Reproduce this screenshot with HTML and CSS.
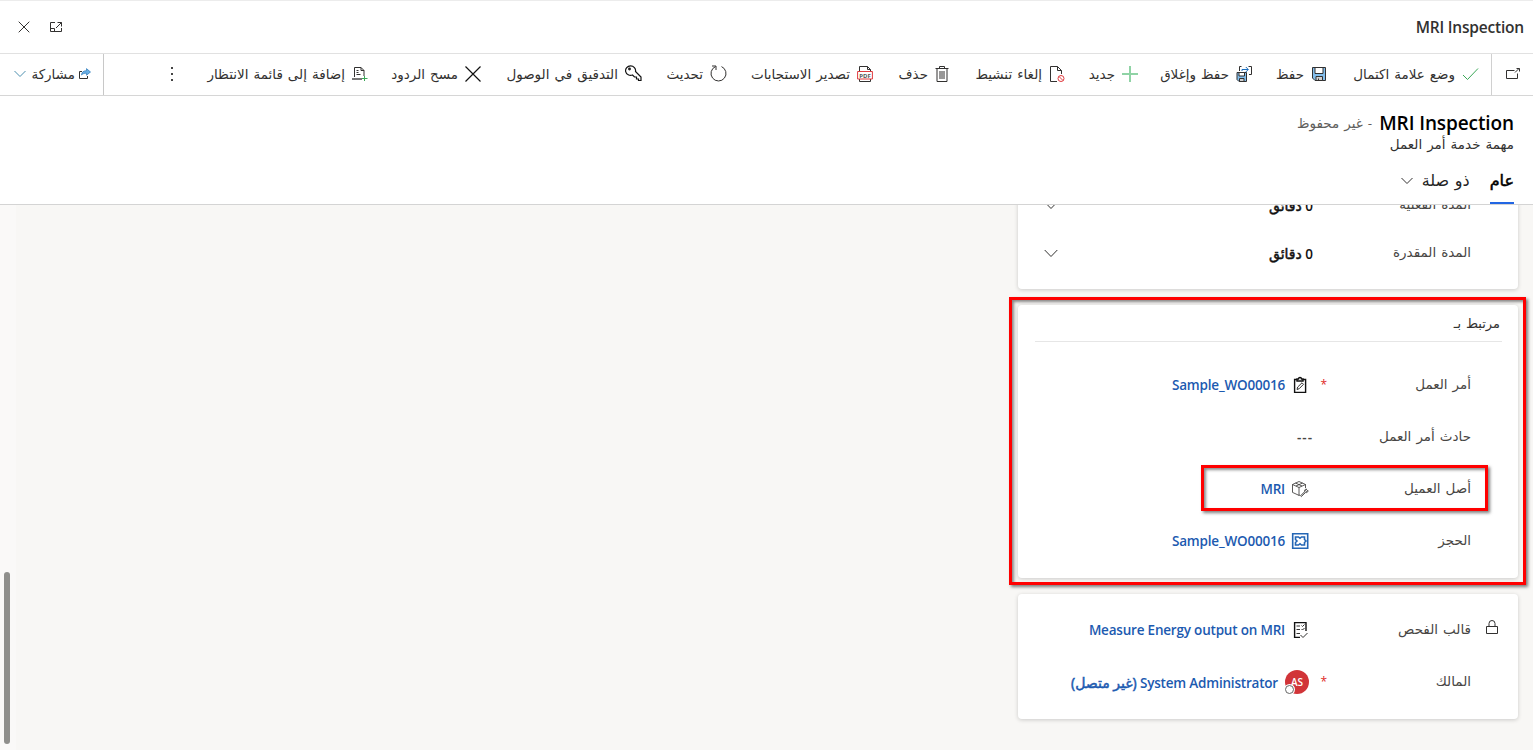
FILE: index.html
```html
<!DOCTYPE html>
<html lang="ar" dir="rtl">
<head>
  <meta charset="UTF-8" />
  <meta name="viewport" content="width=device-width, initial-scale=1.0" />
  <title>MRI Inspection</title>
  <link rel="stylesheet" href="styles.css">
</head>
<body>
  <!-- dialog title -->
  <div class="dialog-bar">
    <h1 class="dialog-title">MRI Inspection</h1>
    <div class="dialog-actions">
      <svg class="icon-expand" width="14" height="12" viewBox="0 0 14 12"><path d="M6 1.500H1.500v9h11V7M1.500 7.500h4v3M8.500 1.500h4v4M12.500 1.500L7 7"/></svg>
      <svg class="icon-close" width="12" height="12" viewBox="0 0 12 12"><path d="M.7.7l10.600 10.600M11.300.7L.7 11.300"/></svg>
    </div>
  </div>

  <!-- command bar -->
  <div class="command-bar">
    <div class="popout">
      <svg width="16" height="13" viewBox="0 0 16 13"><path d="M9.500 3.500H1.500v8h11V6.500M10 5.500l4-4M11.500 1.500h3v3"/></svg>
    </div>
    <div class="commands">
      <div class="command">
        <svg width="17" height="16" viewBox="0 0 17 16"><path class="green" d="M1 9l4.500 4.500L16 2.500"/></svg>
        <span>وضع علامة اكتمال</span>
      </div>
      <div class="command">
        <svg width="16" height="16" viewBox="0 0 16 16"><path class="blue-fill" d="M1.500 1.500h13v13H4l-2.500-2.500z"/><path class="white-fill" d="M4 1.500h8v6H4z"/><path class="grey-fill" d="M5 10.500h6.500v4H5z"/><path d="M7.500 12.500v2"/></svg>
        <span>حفظ</span>
      </div>
      <div class="command">
        <svg width="16" height="16" viewBox="0 0 16 16"><path class="blue-fill" d="M1 6.500h9.500v9H3l-2-2z"/><path class="white-fill" d="M3 6.500h5.500v3.500H3z"/><path class="grey-fill" d="M3.500 12.500h4.500v3H3.500z"/><path d="M5.500.5H3.500V5M12.500.5h3v8H13"/><path class="blue" d="M6 5V3.500h6M9.800 1l2.500 2.500L9.800 6"/></svg>
        <span>حفظ وإغلاق</span>
      </div>
      <div class="command">
        <svg width="16" height="16" viewBox="0 0 16 16"><path class="plus" d="M8 0v16M0 8h16"/></svg>
        <span>جديد</span>
      </div>
      <div class="command">
        <svg width="16" height="16" viewBox="0 0 16 16"><path d="M8 15.500H1.500V.5h7l4 4V8M8.500.5v4h4"/><circle class="red" cx="12" cy="12.500" r="3"/><path class="red" d="M10 10.500l4 4"/></svg>
        <span>إلغاء تنشيط</span>
      </div>
      <div class="command">
        <svg width="14" height="16" viewBox="0 0 14 16"><path d="M.5 2.500h13M4.500 2V.5h5V2M2 2.500v13h10v-13M5 5v8M7 5v8M9 5v8"/></svg>
        <span>حذف</span>
      </div>
      <div class="command">
        <svg width="16" height="16" viewBox="0 0 16 16"><path d="M2.500 5V.5h8l3 3V5M10.500.5v3h3M2.500 13v2.500h11V13"/><path class="red white-fill" d="M.6 5.500h14.800v7.500H.6z"/><text x="8" y="11.500" text-anchor="middle" class="pdf-text">PDF</text></svg>
        <span>تصدير الاستجابات</span>
      </div>
      <div class="command">
        <svg width="17" height="17" viewBox="0 0 17 17"><path d="M5.500 1.600A7.500 7.500 0 1 0 11.500 1.600M2 1h4v4"/></svg>
        <span>تحديث</span>
      </div>
      <div class="command">
        <svg width="17" height="17" viewBox="0 0 17 17"><path class="key" d="M7.500 10A5 4.700 0 1 1 10.500 6.500L16 12v3.500h-2.500V14h-2v-2H9.500z"/><circle class="key" cx="4.500" cy="4" r=".8"/></svg>
        <span>التدقيق في الوصول</span>
      </div>
      <div class="command">
        <svg width="16" height="16" viewBox="0 0 16 16"><path class="cross" d="M.5.5l15 15M15.500.5l-15 15"/></svg>
        <span>مسح الردود</span>
      </div>
      <div class="command">
        <svg width="16" height="16" viewBox="0 0 16 16"><path d="M2.500 11V1.500h6.500l3 3V10M9 1.500v3h3M4.500 4.500h2M4.500 6.500h2M4.500 8.500h4"/><path class="grey-line" d="M0 13h10"/><path class="green" d="M12.500 10v5M10 12.500h5.500"/></svg>
        <span>إضافة إلى قائمة الانتظار</span>
      </div>
      <div class="command more">
        <svg width="4" height="16" viewBox="0 0 4 16"><path class="dots" d="M1 1h2v2H1zM1 7h2v2H1zM1 13h2v2H1z"/></svg>
      </div>
    </div>
    <div class="share">
      <svg width="12" height="11" viewBox="0 0 12 11"><path d="M3 3.500H.5v7h8V8"/><path class="share-arrow" d="M2.500 7c.3-3 2-4.300 5-4.300V.6L11.500 4 7.500 7.200V5.300C5.500 5.200 4 5.500 2.500 7z"/></svg>
      <span>مشاركة</span>
      <svg width="12" height="8" viewBox="0 0 12 8"><path class="blue-chevron" d="M.5 1L6 6.500 11.500 1"/></svg>
    </div>
  </div>

  <!-- record header -->
  <header class="record-header">
    <div class="record-title">
      <h2>MRI Inspection</h2>
      <span class="unsaved">- غير محفوظ</span>
    </div>
    <div class="entity-name">مهمة خدمة أمر العمل</div>
    <nav class="tabs">
      <span class="tab active">عام</span>
      <span class="tab">ذو صلة</span>
      <svg width="12" height="8" viewBox="0 0 12 8"><path d="M.5 1L6 6.500 11.500 1"/></svg>
    </nav>
  </header>

  <main class="form-body">
    <section class="card durations">
      <div class="field">
        <span class="label">المدة الفعلية</span>
        <div class="value duration">
          <span>0 <span class="ar">دقائق</span></span>
          <svg width="14" height="9" viewBox="0 0 14 9"><path d="M.7 1L7 7.500 13.300 1"/></svg>
        </div>
      </div>
      <div class="field">
        <span class="label">المدة المقدرة</span>
        <div class="value duration">
          <span>0 <span class="ar">دقائق</span></span>
          <svg width="14" height="9" viewBox="0 0 14 9"><path d="M.7 1L7 7.500 13.300 1"/></svg>
        </div>
      </div>
    </section>

    <section class="card related">
      <h3 class="card-title">مرتبط بـ</h3>
      <div class="field">
        <span class="label">أمر العمل</span>
        <span class="required">*</span>
        <div class="value">
          <svg class="lookup-icon" width="18" height="18" viewBox="0 0 18 18"><path class="bold" d="M6 3.500H3.600v12.900h11V3.500H12"/><path class="bold" d="M6 5V3h1.500c0-2 3-2 3 0H12v2z"/><path d="M6 13.500l.7-2.500L11 6.800l1.500 1.500-4.300 4.400z"/></svg>
          <a href="#">Sample_WO00016</a>
        </div>
      </div>
      <div class="field">
        <span class="label">حادث أمر العمل</span>
        <div class="value empty">---</div>
      </div>
      <div class="field">
        <span class="label">أصل العميل</span>
        <div class="value">
          <svg class="lookup-icon" width="18" height="18" viewBox="0 0 18 18"><path class="thin" d="M9 15l-1 .4-6.500-3V4.500L8 1.500l6.500 3V8M1.500 4.500L8 7.500l6.500-3M8 7.500v8M4.500 3l6.500 3M5 6l6.500-3"/><path class="wrench" d="M9.500 15.800l4-4c-.4-1.700.7-2.900 2.300-2.600l-1.200 1.400.9.900 1.400-1.200c.4 1.600-.9 2.700-2.500 2.300l-4 4z"/></svg>
          <a href="#">MRI</a>
        </div>
      </div>
      <div class="field">
        <span class="label">الحجز</span>
        <div class="value">
          <svg class="lookup-icon booking" width="18" height="18" viewBox="0 0 18 18"><path d="M1.700 1.700h15v14.600h-15z"/><path d="M4.500 5h3l1.500 1.300L10.500 5h3v2.500L15 9l-1.500 1.500V13h-3L9 11.700 7.500 13h-3v-2.500L6 9 4.500 7.500z"/></svg>
          <a href="#">Sample_WO00016</a>
        </div>
      </div>
    </section>

    <section class="card ownership">
      <div class="field">
        <svg class="lock" width="12" height="15" viewBox="0 0 12 15"><path d="M.5 6.500h11v7H.5zM3 6.500V3.500a3 3 0 0 1 6 0v3"/></svg>
        <span class="label">قالب الفحص</span>
        <div class="value">
          <svg class="lookup-icon" width="18" height="18" viewBox="0 0 18 18"><path class="bold" d="M15 10V1.600H3.600v14.800H9"/><path d="M5.500 5H9M5.500 8.500H9M5.500 12.500H9M10.500 4.500l1 1 2-2M10.500 8l1 1 2-2M9.500 14l2.500 2.500 4.500-4.500"/></svg>
          <a href="#">Measure Energy output on MRI</a>
        </div>
      </div>
      <div class="field">
        <span class="label">المالك</span>
        <span class="required">*</span>
        <div class="value">
          <span class="avatar">AS<i class="presence"></i></span>
          <a href="#">System Administrator <span class="ar">(غير متصل)</span></a>
        </div>
      </div>
    </section>

    <div class="scroll-track"><div class="scroll-thumb"></div></div>
  </main>

  <!-- callout frames over the form -->
  <div class="callout callout-section"></div>
  <div class="callout callout-asset"></div>
</body>
</html>
```
FILE: styles.css
```css
* {
  box-sizing: border-box;
}
body {
  margin: 0;
  height: 750px;
  display: flex;
  flex-direction: column;
  overflow: hidden;
  position: relative;
  font-family: "Open Sans", "DejaVu Sans", sans-serif;
  font-size: 13.5px;
  word-spacing: 1.5px;
  color: #323130;
  background-color: #fff;
}
h1, h2, h3 {
  margin: 0;
}
svg {
  flex: none;
  fill: none;
  stroke: #323130;
  stroke-width: 1;
}

/* dialog title */
.dialog-bar {
  flex: none;
  height: 53px;
  padding: 0 9px 0 18px;
  border-top: 1px solid #ececec;
  display: flex;
  align-items: center;
  justify-content: space-between;
}
.dialog-title {
  font-size: 15.5px;
  font-weight: 600;
  letter-spacing: -0.2px;
  word-spacing: 0;
}
.dialog-actions {
  display: flex;
  align-items: center;
  gap: 19px;
}

/* command bar */
.command-bar {
  flex: none;
  height: 43px;
  border-top: 1px solid #e1e1e1;
  border-bottom: 1px solid #d6d6d6;
  display: flex;
  white-space: nowrap;
}
.popout {
  width: 42px;
  padding: 0 12px 2px 0;
  border-left: 1px solid #d0d0d0;
  display: flex;
  align-items: center;
}
.commands {
  flex: 1;
  padding: 0 12px 2px 0;
  display: grid;
  grid-template-columns: 152px 75px 114px 73px 116px 76px 146px 85px 161px 113px 194px 1fr;
  align-items: center;
}
.command {
  display: flex;
  align-items: center;
  gap: 7px;
}
.share {
  width: 104px;
  padding: 0 12px 2px 14px;
  border-right: 1px solid #c8c8c8;
  display: flex;
  align-items: center;
  gap: 4px;
}
.share svg:last-child {
  margin-right: auto;
}
.green { stroke: #3aa757; }
.plus { stroke: #8fd3a5; stroke-width: 2; }
.red { stroke: #e03a3e; }
.blue { stroke: #1a6dbd; }
.blue-fill { fill: #83beec; }
.white-fill { fill: #fff; }
.grey-fill { fill: #d0d0d0; }
.grey-line { stroke: #777; stroke-width: 2; }
.key { stroke: #111; stroke-width: 1.2; }
.cross { stroke: #111; stroke-width: 1.2; }
.dots { fill: #444; stroke: none; }
.blue-chevron { stroke: #4d8fae; }
.share-arrow { fill: #69afe5; stroke: #2b79b9; stroke-width: 0.7; }
.pdf-text {
  font-size: 6px;
  font-weight: 700;
  fill: #555;
  stroke: none;
  direction: ltr;
}

/* record header */
.record-header {
  flex: none;
  height: 109px;
  padding: 14px 19px 0;
  border-bottom: 1px solid #d4d4d4;
}
.record-title {
  height: 25px;
  display: flex;
  align-items: center;
  gap: 7px;
}
.record-title h2 {
  font-size: 19px;
  font-weight: 600;
  letter-spacing: -0.1px;
  word-spacing: 0;
  color: #000;
}
.unsaved {
  color: #605e5c;
}
.entity-name {
  height: 18px;
  line-height: 18px;
}
.tabs {
  margin-top: 14px;
  height: 37px;
  display: flex;
  align-items: center;
}
.tab {
  height: 37px;
  line-height: 26px;
  margin-left: 9px;
  font-size: 16px;
  color: #242424;
}
.tab.active {
  margin-left: 20px;
  font-weight: 400;
  -webkit-text-stroke: 0.5px;
  color: #000;
  border-bottom: 2px solid #2266e3;
}
.tabs svg {
  margin-bottom: 9px;
}

/* form */
.form-body {
  flex: 1;
  min-height: 0;
  overflow: hidden;
  position: relative;
  padding-right: 15px;
  background-color: #f8f7f5;
}
.card {
  width: 500px;
  margin-bottom: 16px;
  padding: 0 14px 11px 26px;
  background-color: #fff;
  border-radius: 4px;
  box-shadow: 0 1px 4px rgba(0, 0, 0, 0.18);
}
.field {
  height: 52px;
  display: grid;
  grid-template-columns: 33px 144px 14px 1fr;
  align-items: center;
  white-space: nowrap;
}
.lock {
  grid-column: 1;
  grid-row: 1;
  margin-right: 6px;
  margin-bottom: 6px;
}
.label {
  grid-column: 2;
  grid-row: 1;
  padding-bottom: 2px;
  color: #484644;
}
.required {
  grid-column: 3;
  padding-bottom: 1px;
  font-size: 12px;
  color: #e0281f;
}
.value {
  grid-column: 4;
  grid-row: 1;
  display: flex;
  align-items: center;
  font-size: 13.5px;
  font-weight: 600;
  word-spacing: 0;
}
.value a {
  color: #1c5ab0;
  text-decoration: none;
  letter-spacing: -0.2px;
}
.value .ar {
  font-size: 14px;
  font-weight: 400;
  letter-spacing: 0;
  -webkit-text-stroke: 0.5px;
}
.lookup-icon {
  margin: 0 4px 0 6px;
}
.lookup-icon .bold {
  stroke: #111;
  stroke-width: 1.4;
}
.thin {
  stroke-width: 0.8;
}
.wrench {
  fill: #ddd;
  stroke-width: 0.8;
}
.booking {
  stroke: #2466b5;
  stroke-width: 1.6;
}
.empty {
  color: #484644;
  letter-spacing: 1px;
}
.duration {
  justify-content: space-between;
  color: #111;
}
.durations {
  margin-top: -24px;
  padding-bottom: 12px;
}
.durations .field {
  height: 48px;
}
.card-title {
  height: 37px;
  line-height: 36px;
  margin: 0 2px 17px -9px;
  padding-right: 2px;
  border-bottom: 1px solid #e6e6e6;
  font-size: 13px;
  font-weight: 400;
}
.ownership {
  padding-top: 10px;
}
.avatar {
  position: relative;
  width: 24px;
  height: 24px;
  line-height: 25px;
  margin: 0 4px 0 7px;
  border-radius: 50%;
  background-color: #d13438;
  color: #fff;
  font-size: 10px;
  text-align: center;
}
.presence {
  position: absolute;
  left: 0;
  bottom: 0;
  width: 9px;
  height: 9px;
  border: 1px solid #666;
  border-radius: 50%;
  background-color: #fff;
  box-shadow: 0 0 0 1px #fff;
}
.scroll-track {
  position: absolute;
  left: 0;
  top: 0;
  width: 16px;
  height: 100%;
  padding: 367px 6px 0 4px;
  background-color: #faf9f8;
}
.scroll-thumb {
  height: 172px;
  border-radius: 3px;
  background-color: #8f8f8c;
}

/* callouts */
.callout {
  position: absolute;
  border: 3px solid #f00;
  box-shadow: 2px 2px 3px rgba(0, 0, 0, 0.5), inset 2px 2px 3px rgba(0, 0, 0, 0.45);
}
.callout-section {
  left: 1009px;
  top: 297px;
  width: 517px;
  height: 288px;
}
.callout-asset {
  left: 1201px;
  top: 465px;
  width: 287px;
  height: 46px;
}
```
